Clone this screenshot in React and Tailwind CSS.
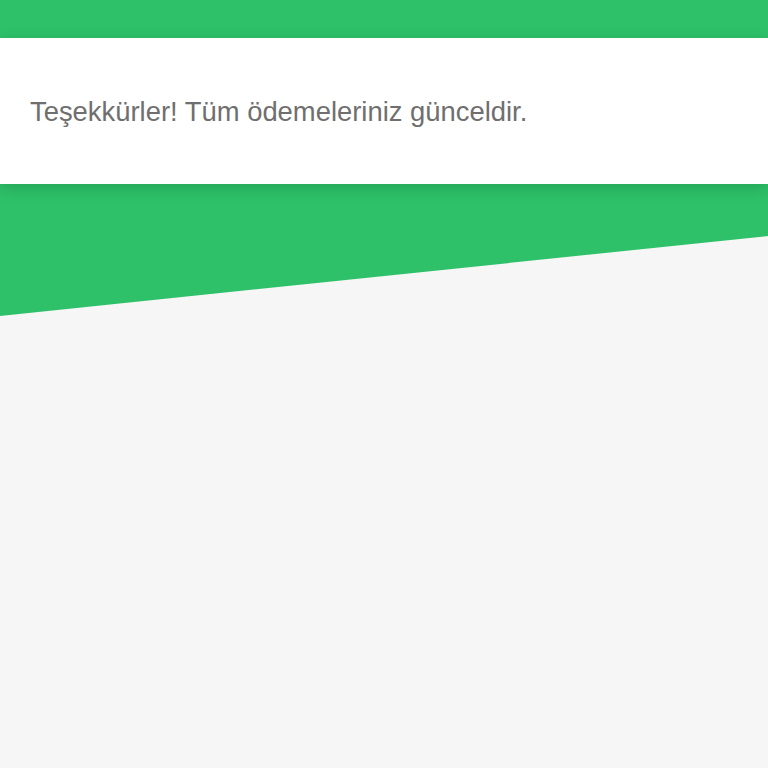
export default function App() {
  return (
    <div className="min-h-[768px] w-full bg-[#f6f6f6]">
      <div className="h-[316px] w-full bg-[#2ec16a] pt-[38px] [clip-path:polygon(0_0,100%_0,100%_236px,0_316px)]">
        <div className="flex h-[146px] items-center bg-white px-[30px] pt-[2px] shadow-[0_4px_14px_rgba(0,60,20,0.22)]">
          <p className="text-[27.4px] leading-none text-[#6f6f6f] [font-family:'Liberation_Sans',Arial,sans-serif]">
            Teşekkürler! Tüm ödemeleriniz günceldir.
          </p>
        </div>
      </div>
    </div>
  );
}
